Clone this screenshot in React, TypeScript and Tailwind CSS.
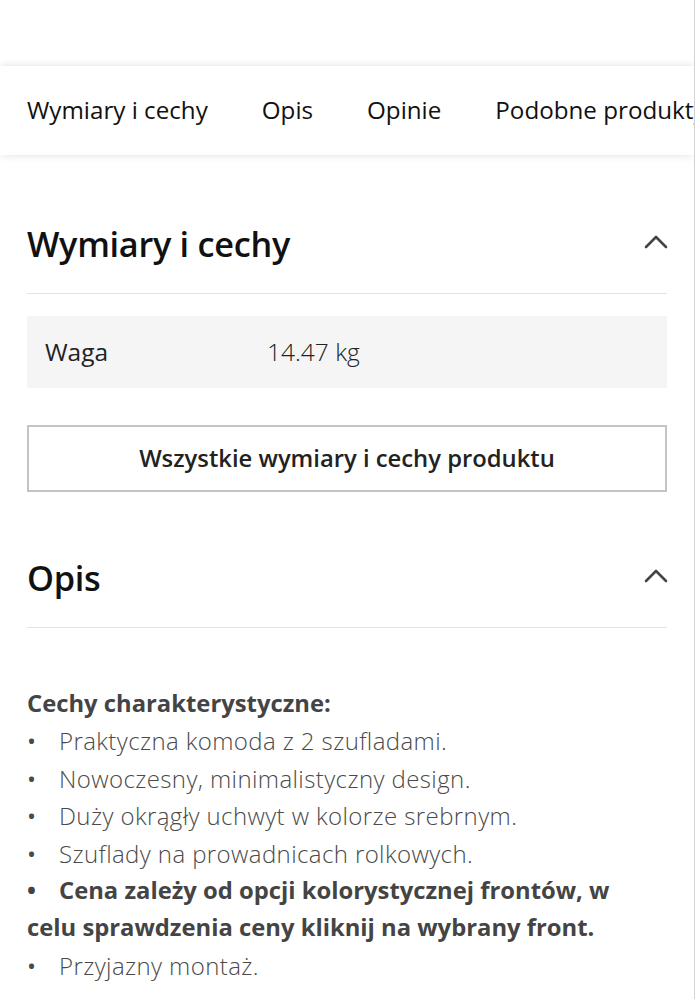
import React from "react";

const Chevron = () => (
  <svg width="24" height="16" viewBox="0 0 24 16" fill="none">
    <path d="M2 13 L12 3 L22 13" stroke="#444" strokeWidth="2.6" strokeLinecap="round" strokeLinejoin="round" />
  </svg>
);

export default function App() {
  const font = { fontFamily: '"Open Sans", "Noto Sans", sans-serif' };
  const items: { t: string; bold?: boolean }[] = [
    { t: "Praktyczna komoda z 2 szufladami." },
    { t: "Nowoczesny, minimalistyczny design." },
    { t: "Duży okrągły uchwyt w kolorze srebrnym." },
    { t: "Szuflady na prowadnicach rolkowych." },
  ];
  return (
    <div className="w-[695px] min-h-[999px] bg-white border-r border-[#d4d4d4] overflow-hidden" style={font}>
      <div className="h-[66px]" />
      <div className="h-[89px] bg-white shadow-[0_0_8px_rgba(0,0,0,0.13)] flex items-center pl-[27px] gap-[54px] whitespace-nowrap overflow-hidden text-[24.2px] text-[#111]">
        <span>Wymiary i cechy</span>
        <span>Opis</span>
        <span>Opinie</span>
        <span>Podobne produkty</span>
      </div>
      <div className="px-[27px] pr-[27px]">
        <div className="mt-[39px] h-[100px] flex items-center justify-between border-b border-[#e3e3e3]">
          <h2 className="text-[34.3px] font-semibold text-[#111] tracking-[-0.3px]">Wymiary i cechy</h2>
          <div className="mr-[-1px] mb-[4px]"><Chevron /></div>
        </div>
        <div className="mt-[22px] h-[72px] bg-[#f5f5f5] flex items-center text-[24.5px] text-[#222]">
          <span className="w-[240px] pl-[18px]">Waga</span>
          <span className="font-light">14.47 kg</span>
        </div>
        <button className="mt-[37px] w-full h-[67px] border-2 border-[#c4c4c4] bg-white flex items-center justify-center text-[23.8px] font-semibold text-[#222]" style={font}>
          Wszystkie wymiary i cechy produktu
        </button>
        <div className="mt-[36px] h-[100px] flex items-center justify-between border-b border-[#e3e3e3]">
          <h2 className="text-[34.3px] font-semibold text-[#111] tracking-[-0.3px]">Opis</h2>
          <div className="mr-[-1px] mb-[4px]"><Chevron /></div>
        </div>
        <div className="mt-[57px] text-[#4a4a4a]">
          <div className="font-bold text-[#444] text-[23.8px] leading-[37.4px]">Cechy charakterystyczne:</div>
          {items.map((it) => (
            <div key={it.t} className="font-light whitespace-nowrap text-[24px] leading-[37.4px] tracking-[0.4px]">
              <span className="inline-block w-[32px] font-normal tracking-normal">•</span>
              {it.t}
            </div>
          ))}
          <div className="font-bold text-[#444] whitespace-nowrap text-[23.8px] leading-[37.4px]">
            <span className="inline-block w-[32px]">•</span>
            Cena zależy od opcji kolorystycznej frontów, w<br />
            celu sprawdzenia ceny kliknij na wybrany front.
          </div>
          <div className="font-light text-[24px] leading-[37.4px] tracking-[0.4px]">
            <span className="inline-block w-[32px] font-normal tracking-normal">•</span>
            Przyjazny montaż.
          </div>
        </div>
      </div>
    </div>
  );
}
